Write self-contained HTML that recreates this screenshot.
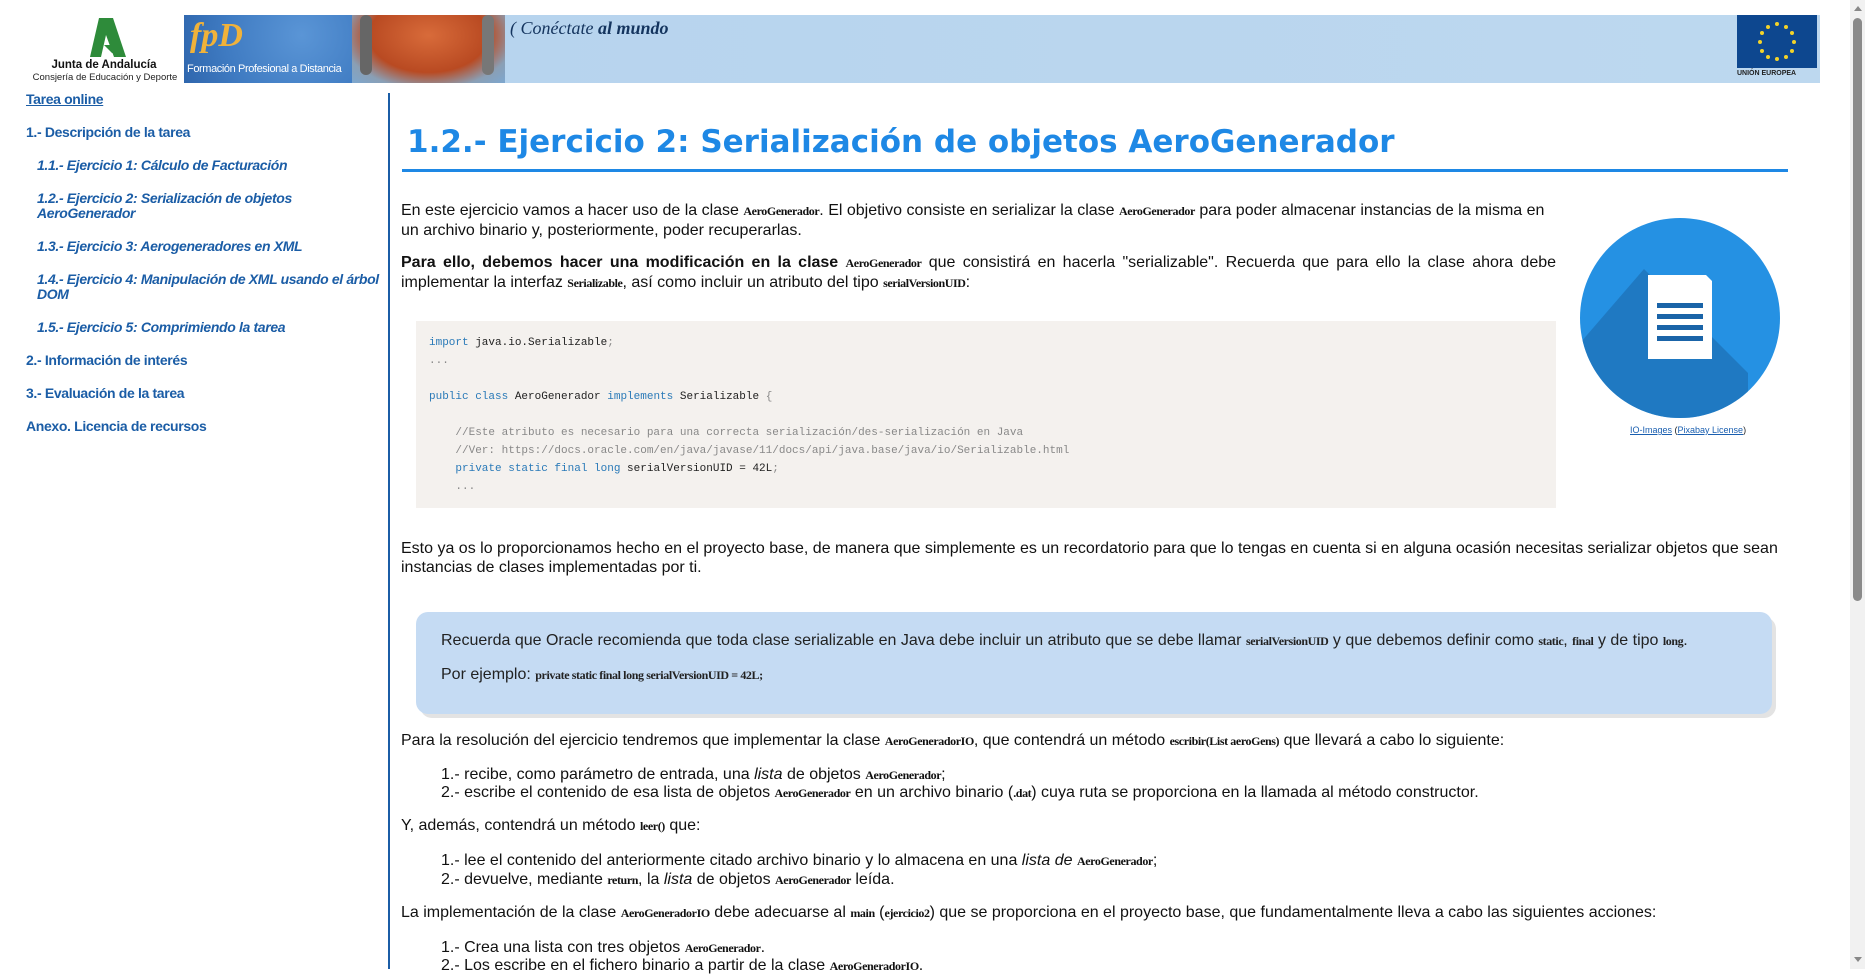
<!DOCTYPE html>
<html><head><meta charset="utf-8">
<style>
*{margin:0;padding:0;box-sizing:border-box}
body{width:1865px;height:969px;overflow:hidden;background:#fff;font-family:"Liberation Sans",Arial,sans-serif;color:#111;position:relative}
.abs{position:absolute}
.side a{position:absolute;color:#1b5da6;font-size:14px;font-weight:bold;text-decoration:none;line-height:15px;letter-spacing:-0.35px}
.side a.sub{font-style:italic;left:37px}
.side a.top{left:26px}
p,li{font-size:16px;line-height:19px}
.c{font-family:"Liberation Serif",serif;font-weight:bold;font-size:12px;letter-spacing:-0.4px}
pre{font-family:"Liberation Mono",monospace;font-size:11px;color:#222;line-height:18px}
.k{color:#2a7ab8}.g{color:#888}
</style></head><body>
<div class="abs" style="left:26px;top:15px;width:158px;height:68px">
 <svg width="158" height="68" style="position:absolute;left:0;top:0">
  <path d="M73 3 L87 3 L100 42 L88 42 L80 20 L75 42 L64 42 Z" fill="#2e8b3a"/>
  <path d="M78 30 L92 30 L95 40 L86 38 Z" fill="#2e8b3a"/>
  <text x="78" y="53" font-family="Liberation Sans" font-size="11.5" font-weight="bold" text-anchor="middle" fill="#111">Junta de Andalucía</text>
  <text x="79" y="65" font-family="Liberation Sans" font-size="9.5" text-anchor="middle" fill="#222">Consjería de Educación y Deporte</text>
 </svg>
</div>
<div class="abs" style="left:184px;top:15px;width:1636px;height:68px;background:linear-gradient(90deg,#8fb8de 0,#b7d4ee 20%,#bdd8ef 100%)"></div>
<div class="abs" style="left:184px;top:15px;width:168px;height:68px;background:radial-gradient(circle at 70% 30%,#5a95d6,#3f7bc2 60%,#2f66ad)">
 <div style="position:absolute;left:6px;top:2px;color:#f0b23a;font:italic bold 34px 'Liberation Serif',serif">fpD</div>
 <div style="position:absolute;left:3px;top:48px;color:#fff;font-size:11px;letter-spacing:-0.4px">Formación Profesional a Distancia</div>
</div>
<div class="abs" style="left:352px;top:15px;width:153px;height:68px;background:radial-gradient(ellipse at 50% 30%,#d86b3a,#b94a22 55%,#8a9fb5 80%,#7da7cf)"></div>
<div class="abs" style="left:360px;top:15px;width:12px;height:60px;background:#666;border-radius:6px"></div>
<div class="abs" style="left:482px;top:15px;width:12px;height:60px;background:#777;border-radius:6px"></div>
<div class="abs" style="left:510px;top:18px;color:#14345e;font:italic 18px 'Liberation Serif',serif">( Conéctate <b>al mundo</b></div>
<div class="abs" style="left:1737px;top:15px;width:80px;height:53px;background:#0d478f">
 <svg width="80" height="53"><g fill="#f2d32a">
 <circle cx="40" cy="9" r="2"/><circle cx="49" cy="12" r="2"/><circle cx="55" cy="18" r="2"/><circle cx="57" cy="27" r="2"/><circle cx="55" cy="36" r="2"/><circle cx="49" cy="42" r="2"/><circle cx="40" cy="44" r="2"/><circle cx="31" cy="42" r="2"/><circle cx="25" cy="36" r="2"/><circle cx="23" cy="27" r="2"/><circle cx="25" cy="18" r="2"/><circle cx="31" cy="12" r="2"/></g></svg>
</div>
<div class="abs" style="left:1737px;top:70px;font-size:7px;font-weight:bold;color:#222">UNIÓN EUROPEA</div>
<div class="abs" style="left:1850px;top:0;width:15px;height:969px;background:#f1f1f1"></div>
<div class="abs" style="left:1853px;top:18px;width:9px;height:583px;background:#8a8a8a;border-radius:5px"></div>
<div class="abs" style="left:1853px;top:6px;width:0;height:0;border-left:4px solid transparent;border-right:4px solid transparent;border-bottom:5px solid #888;margin-left:1px"></div>
<div class="abs" style="left:1853px;top:957px;width:0;height:0;border-left:4px solid transparent;border-right:4px solid transparent;border-top:5px solid #888;margin-left:1px"></div>
<div class="side">
 <a class="top" style="top:92px;text-decoration:underline">Tarea online</a>
 <a class="top" style="top:125px">1.- Descripción de la tarea</a>
 <a class="sub" style="top:158px">1.1.- Ejercicio 1: Cálculo de Facturación</a>
 <a class="sub" style="top:191px">1.2.- Ejercicio 2: Serialización de objetos<br>AeroGenerador</a>
 <a class="sub" style="top:239px">1.3.- Ejercicio 3: Aerogeneradores en XML</a>
 <a class="sub" style="top:272px">1.4.- Ejercicio 4: Manipulación de XML usando el árbol<br>DOM</a>
 <a class="sub" style="top:320px">1.5.- Ejercicio 5: Comprimiendo la tarea</a>
 <a class="top" style="top:353px">2.- Información de interés</a>
 <a class="top" style="top:386px">3.- Evaluación de la tarea</a>
 <a class="top" style="top:419px">Anexo. Licencia de recursos</a>
</div>
<div class="abs" style="left:388px;top:93px;width:2px;height:876px;background:#1b5da6"></div>
<div class="abs" style="left:407px;top:124px;font-family:'DejaVu Sans',sans-serif;font-size:31px;font-weight:bold;color:#1e88e5;white-space:nowrap">1.2.- Ejercicio 2: Serialización de objetos AeroGenerador</div>
<div class="abs" style="left:402px;top:169px;width:1386px;height:3px;background:#1e88e5"></div>

<svg class="abs" style="left:1578px;top:217px" width="205" height="205">
 <defs><clipPath id="cc"><circle cx="102" cy="101" r="100"/></clipPath></defs>
 <circle cx="102" cy="101" r="100" fill="#2591e3"/>
 <path d="M66 52 L170 156 L170 260 L-10 260 L-10 140 Z" fill="#1d6fb3" clip-path="url(#cc)" opacity="0.7"/>
 <path d="M70 58 L128 58 L134 64 L134 142 L70 142 Z" fill="#fff"/>
 <g fill="#1a64a8"><rect x="79" y="86" width="46" height="5"/><rect x="79" y="97" width="46" height="5"/><rect x="79" y="108" width="46" height="5"/><rect x="79" y="119" width="46" height="5"/></g>
</svg>
<div class="abs" style="left:1630px;top:425px;font-size:9px;color:#222"><u style="color:#1a5fb0">IO-Images</u> (<u style="color:#1a5fb0">Pixabay License</u>)</div>

<p class="abs" style="left:401px;top:201px;width:1155px">En este ejercicio vamos a hacer uso de la clase <span class="c">AeroGenerador</span>. El objetivo consiste en serializar la clase <span class="c">AeroGenerador</span> para poder almacenar instancias de la misma en un archivo binario y, posteriormente, poder recuperarlas.</p>
<p class="abs" style="left:401px;top:253px;width:1155px;text-align:justify"><b>Para ello, debemos hacer una modificación en la clase</b> <span class="c">AeroGenerador</span> que consistirá en hacerla "serializable". Recuerda que para ello la clase ahora debe implementar la interfaz <span class="c">Serializable</span>, así como incluir un atributo del tipo <span class="c">serialVersionUID</span>:</p>

<div class="abs" style="left:416px;top:321px;width:1140px;height:187px;background:#f4f1ee"></div>
<pre class="abs" style="left:429px;top:334px"><span class="k">import</span> java.io.Serializable<span class="g">;</span>
<span class="g">...</span>
 
<span class="k">public class</span> AeroGenerador <span class="k">implements</span> Serializable <span class="g">{</span>
 
<span class="g">    //Este atributo es necesario para una correcta serialización/des-serialización en Java</span>
<span class="g">    //Ver: https://docs.oracle.com/en/java/javase/11/docs/api/java.base/java/io/Serializable.html</span>
    <span class="k">private static final long</span> serialVersionUID = 42L<span class="g">;</span>
<span class="g">    ...</span></pre>

<p class="abs" style="left:401px;top:539px;width:1390px">Esto ya os lo proporcionamos hecho en el proyecto base, de manera que simplemente es un recordatorio para que lo tengas en cuenta si en alguna ocasión necesitas serializar objetos que sean instancias de clases implementadas por ti.</p>

<div class="abs" style="left:420px;top:617px;width:1356px;height:101px;background:#e3e3e3;border-radius:12px"></div>
<div class="abs" style="left:416px;top:612px;width:1356px;height:102px;background:#c5dbf3;border-radius:12px"></div>
<p class="abs" style="left:441px;top:631px;width:1320px;color:#222">Recuerda que Oracle recomienda que toda clase serializable en Java debe incluir un atributo que se debe llamar <span class="c">serialVersionUID</span> y que debemos definir como <span class="c">static</span>, <span class="c">final</span> y de tipo <span class="c">long</span>.</p>
<p class="abs" style="left:441px;top:665px;color:#222">Por ejemplo: <span class="c">private static final long serialVersionUID = 42L;</span></p>

<p class="abs" style="left:401px;top:731px;white-space:nowrap">Para la resolución del ejercicio tendremos que implementar la clase <span class="c">AeroGeneradorIO</span>, que contendrá un método <span class="c">escribir(List aeroGens)</span> que llevará a cabo lo siguiente:</p>
<p class="abs" style="left:441px;top:765px;white-space:nowrap">1.- recibe, como parámetro de entrada, una <i>lista</i> de objetos <span class="c">AeroGenerador</span>;</p>
<p class="abs" style="left:441px;top:783px;white-space:nowrap">2.- escribe el contenido de esa lista de objetos <span class="c">AeroGenerador</span> en un archivo binario (<span class="c">.dat</span>) cuya ruta se proporciona en la llamada al método constructor.</p>
<p class="abs" style="left:401px;top:816px;white-space:nowrap">Y, además, contendrá un método <span class="c">leer()</span> que:</p>
<p class="abs" style="left:441px;top:851px;white-space:nowrap">1.- lee el contenido del anteriormente citado archivo binario y lo almacena en una <i>lista de</i> <span class="c">AeroGenerador</span>;</p>
<p class="abs" style="left:441px;top:870px;white-space:nowrap">2.- devuelve, mediante <span class="c">return</span>, la <i>lista</i> de objetos <span class="c">AeroGenerador</span> leída.</p>
<p class="abs" style="left:401px;top:903px;white-space:nowrap">La implementación de la clase <span class="c">AeroGeneradorIO</span> debe adecuarse al <span class="c">main</span> (<span class="c">ejercicio2</span>) que se proporciona en el proyecto base, que fundamentalmente lleva a cabo las siguientes acciones:</p>
<p class="abs" style="left:441px;top:938px;white-space:nowrap">1.- Crea una lista con tres objetos <span class="c">AeroGenerador</span>.</p>
<p class="abs" style="left:441px;top:956px;white-space:nowrap">2.- Los escribe en el fichero binario a partir de la clase <span class="c">AeroGeneradorIO</span>.</p>
</body></html>
